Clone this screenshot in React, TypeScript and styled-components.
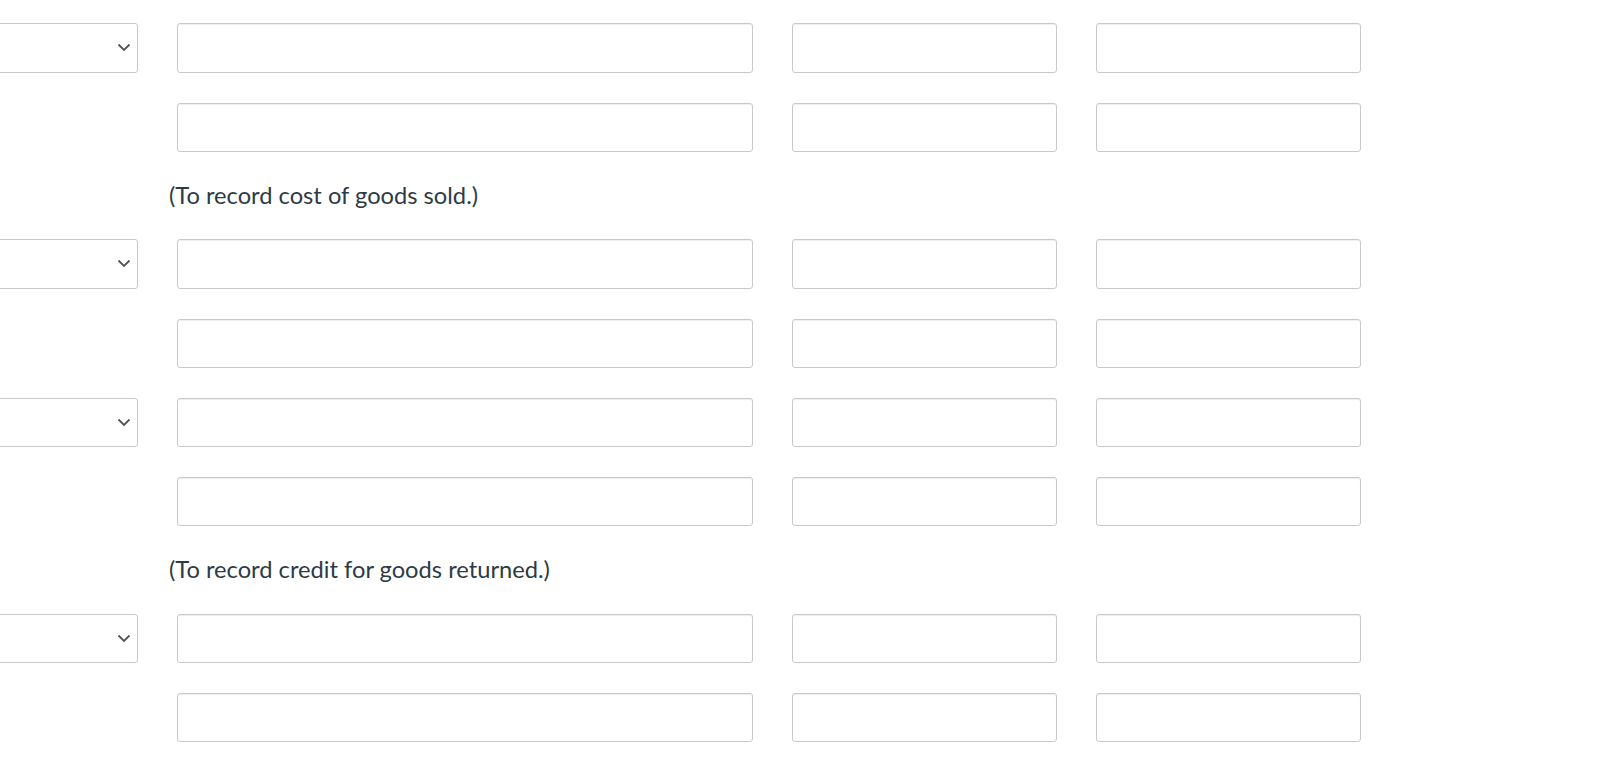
import styled, { createGlobalStyle } from 'styled-components';

const GlobalStyle = createGlobalStyle`
  html, body {
    margin: 0;
    padding: 0;
    background: #fff;
    overflow: hidden;
  }
  body {
    font-family: Lato, 'Liberation Sans', sans-serif;
    color: #2d3b45;
  }
`;

const Sheet = styled.div`
  display: flex;
  flex-direction: column;
  gap: 30px;
  padding-top: 23.3px;
  margin-left: -100px;
`;

const Row = styled.div`
  display: grid;
  grid-template-columns: 238px 576px 265px 265px;
  column-gap: 39px;
  height: 49.3px;
`;

const Field = styled.input`
  box-sizing: border-box;
  width: 100%;
  height: 100%;
  margin: 0;
  border: 1px solid #c9c9c9;
  border-radius: 3px;
  background: #fff;
  box-shadow: inset 0 1px 1px rgba(0, 0, 0, 0.07);
  outline: none;
`;

const SelectBox = styled.div`
  box-sizing: border-box;
  height: 100%;
  border: 1px solid #c9c9c9;
  border-radius: 3px;
  background: #fff;
  display: flex;
  align-items: center;
  justify-content: flex-end;
  padding-right: 6px;
`;

const Empty = styled.div``;

const Note = styled.div`
  padding-left: 269px;
  font-size: 23.7px;
  line-height: 27.4px;
  color: #2d3b45;
`;

function Chevron() {
  return (
    <svg width="14" height="9" viewBox="0 0 14 9">
      <path
        d="M1.5 1.5 L7 7 L12.5 1.5"
        fill="none"
        stroke="#555"
        strokeWidth="1.8"
      />
    </svg>
  );
}

function EntryRow({ withSelect }: { withSelect: boolean }) {
  return (
    <Row>
      {withSelect ? (
        <SelectBox>
          <Chevron />
        </SelectBox>
      ) : (
        <Empty />
      )}
      <Field type="text" />
      <Field type="text" />
      <Field type="text" />
    </Row>
  );
}

const layout: Array<{ kind: 'row'; select: boolean } | { kind: 'note'; text: string }> = [
  { kind: 'row', select: true },
  { kind: 'row', select: false },
  { kind: 'note', text: '(To record cost of goods sold.)' },
  { kind: 'row', select: true },
  { kind: 'row', select: false },
  { kind: 'row', select: true },
  { kind: 'row', select: false },
  { kind: 'note', text: '(To record credit for goods returned.)' },
  { kind: 'row', select: true },
  { kind: 'row', select: false },
];

function App() {
  return (
    <>
      <GlobalStyle />
      <Sheet>
        {layout.map((item, i) =>
          item.kind === 'row' ? (
            <EntryRow key={i} withSelect={item.select} />
          ) : (
            <Note key={i}>{item.text}</Note>
          )
        )}
      </Sheet>
    </>
  );
}

export default App;
